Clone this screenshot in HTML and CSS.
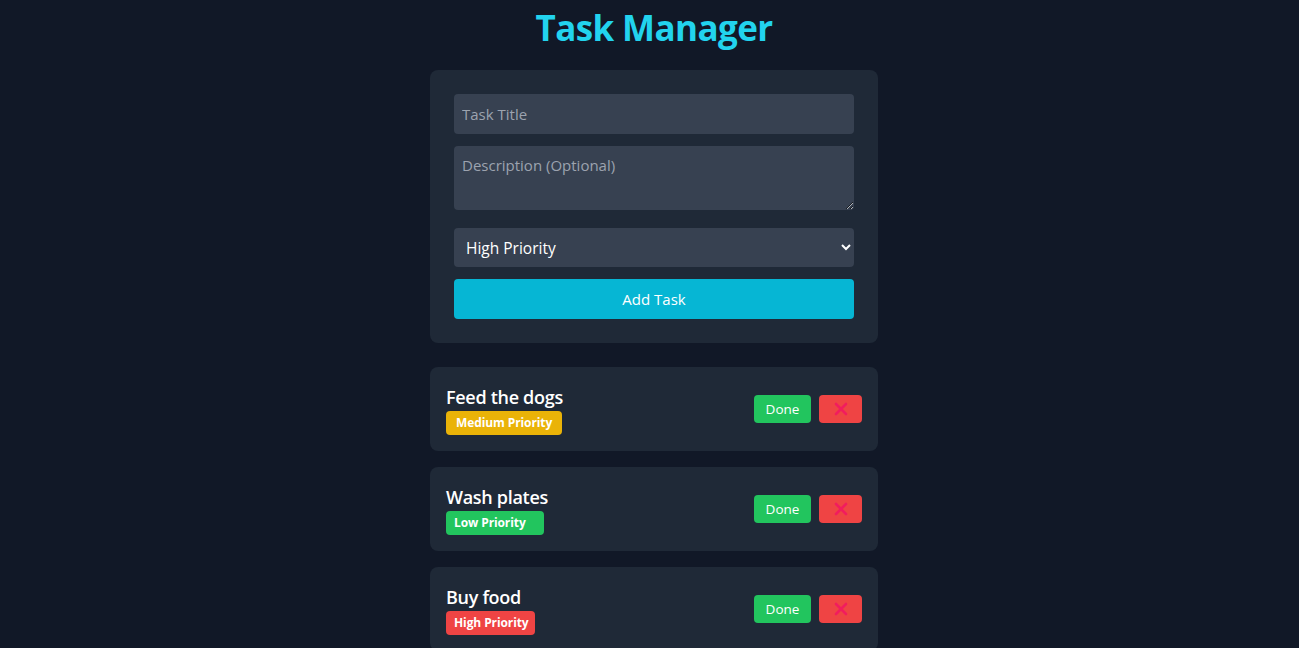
FILE: index.html
```html
<!DOCTYPE html>
<html>
<head>
<meta charset="utf-8">
<link rel="stylesheet" href="styles.css">
</head>
<body>
<div class="page">
  <h1 class="title">Task Manager</h1>
  <form class="form-card">
    <input class="field" type="text" placeholder="Task Title">
    <textarea class="field area" placeholder="Description (Optional)"></textarea>
    <select class="field select">
      <option>High Priority</option>
      <option>Medium Priority</option>
      <option>Low Priority</option>
    </select>
    <button class="add-btn" type="button">Add Task</button>
  </form>
  <div class="task-list">
    <div class="task">
      <div class="task-info">
        <div class="task-title">Feed the dogs</div>
        <span class="badge badge-medium">Medium Priority</span>
      </div>
      <div class="actions">
        <button class="done-btn" type="button">Done</button>
        <button class="del-btn" type="button"><svg width="14" height="14" viewBox="0 0 14 14"><path d="M2 2L12 12M12 2L2 12" stroke="#f11d5e" stroke-width="2.6" stroke-linecap="round"/></svg></button>
      </div>
    </div>
    <div class="task">
      <div class="task-info">
        <div class="task-title">Wash plates</div>
        <span class="badge badge-low">Low Priority</span>
      </div>
      <div class="actions">
        <button class="done-btn" type="button">Done</button>
        <button class="del-btn" type="button"><svg width="14" height="14" viewBox="0 0 14 14"><path d="M2 2L12 12M12 2L2 12" stroke="#f11d5e" stroke-width="2.6" stroke-linecap="round"/></svg></button>
      </div>
    </div>
    <div class="task">
      <div class="task-info">
        <div class="task-title">Buy food</div>
        <span class="badge badge-high">High Priority</span>
      </div>
      <div class="actions">
        <button class="done-btn" type="button">Done</button>
        <button class="del-btn" type="button"><svg width="14" height="14" viewBox="0 0 14 14"><path d="M2 2L12 12M12 2L2 12" stroke="#f11d5e" stroke-width="2.6" stroke-linecap="round"/></svg></button>
      </div>
    </div>
  </div>
</div>
</body>
</html>
```
FILE: styles.css
```css
* { box-sizing: border-box; }
html, body {
  margin: 0;
  background: #111827;
  font-family: "Open Sans", "Noto Sans", sans-serif;
  color: #ffffff;
}
body {
  padding-left: 9px;
}
.page {
  width: 448px;
  margin: 0 auto;
  padding-top: 8px;
}
.title {
  margin: 0 0 22px 0;
  font-size: 35px;
  line-height: 40px;
  font-weight: 700;
  text-align: center;
  color: #22d3ee;
  letter-spacing: -0.6px;
}
.form-card {
  background: #1f2937;
  border-radius: 8px;
  padding: 24px;
  margin-bottom: 24px;
}
.field {
  display: block;
  width: 100%;
  height: 40px;
  margin: 0 0 12px 0;
  padding: 0 8px;
  border: none;
  border-radius: 4px;
  background: #374151;
  color: #ffffff;
  font-family: inherit;
  font-size: 15px;
  outline: none;
}
.field::placeholder { color: #9ca3af; }
.area {
  height: 64px;
  padding-top: 9px;
  margin-bottom: 18px;
  resize: vertical;
}
.select {
  height: 39px;
  padding-left: 8px;
  font-size: 15.5px;
}
.add-btn {
  display: block;
  width: 100%;
  height: 40px;
  border: none;
  border-radius: 4px;
  background: #06b6d4;
  color: #ffffff;
  font-family: inherit;
  font-size: 15px;
}
.task-list {
  display: flex;
  flex-direction: column;
  gap: 16px;
}
.task {
  display: flex;
  align-items: center;
  justify-content: space-between;
  height: 84px;
  padding: 0 16px;
  background: #1f2937;
  border-radius: 8px;
}
.task-info {
  display: flex;
  flex-direction: column;
  align-items: flex-start;
  padding-top: 2px;
}
.task-title {
  font-size: 18px;
  font-weight: 600;
  line-height: 24px;
  letter-spacing: -0.3px;
}
.badge {
  display: inline-block;
  height: 24px;
  line-height: 24px;
  margin-top: 2px;
  padding: 0 8px;
  border-radius: 4px;
  font-size: 12px;
  font-weight: 700;
  color: #ffffff;
  letter-spacing: -0.1px;
}
.badge-medium { background: #eab308; padding: 0 10px; }
.badge-low { background: #22c55e; padding-right: 18px; }
.badge-high { background: #ef4444; padding-right: 6px; }
.actions {
  display: flex;
  gap: 8px;
}
.done-btn, .del-btn {
  height: 28px;
  border: none;
  border-radius: 4px;
  color: #ffffff;
  font-family: inherit;
  font-size: 13.5px;
  display: flex;
  align-items: center;
  justify-content: center;
}
.done-btn {
  width: 57px;
  background: #22c55e;
}
.del-btn {
  width: 43px;
  background: #ef4444;
}
```
